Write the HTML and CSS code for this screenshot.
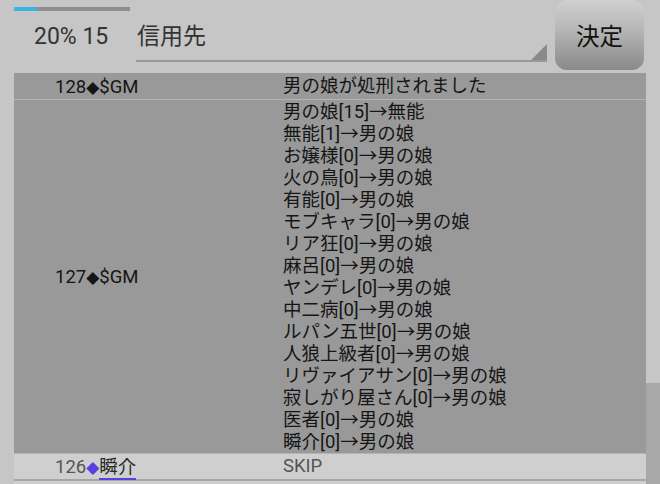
FILE: index.html
```html
<!DOCTYPE html>
<html lang="ja">
<head>
    <meta charset="UTF-8">
    <title>Log</title>
    <link rel="stylesheet" href="styles.css">
</head>
<body>
    <div class="top-bar">
        <div class="status">
            <div class="progress"><div class="progress-fill"></div></div>
            <div class="status-text">20% 15</div>
        </div>
        <div class="select">
            <span class="select-text">信用先</span>
            <span class="select-arrow"></span>
        </div>
        <button class="decide">決定</button>
    </div>

    <div class="log-wrap">
        <div class="log">
            <div class="row">
                <div class="who">128<span class="dia">◆</span>$GM</div>
                <div class="what">男の娘が処刑されました</div>
            </div>
            <div class="row">
                <div class="who">127<span class="dia">◆</span>$GM</div>
                <div class="what">
                    <div>男の娘[15]→無能</div>
                    <div>無能[1]→男の娘</div>
                    <div>お嬢様[0]→男の娘</div>
                    <div>火の鳥[0]→男の娘</div>
                    <div>有能[0]→男の娘</div>
                    <div>モブキャラ[0]→男の娘</div>
                    <div>リア狂[0]→男の娘</div>
                    <div>麻呂[0]→男の娘</div>
                    <div>ヤンデレ[0]→男の娘</div>
                    <div>中二病[0]→男の娘</div>
                    <div>ルパン五世[0]→男の娘</div>
                    <div>人狼上級者[0]→男の娘</div>
                    <div>リヴァイアサン[0]→男の娘</div>
                    <div>寂しがり屋さん[0]→男の娘</div>
                    <div>医者[0]→男の娘</div>
                    <div>瞬介[0]→男の娘</div>
                </div>
            </div>
            <div class="row light">
                <div class="who muted">126<span class="dia blue">◆</span><span class="name">瞬介</span></div>
                <div class="what muted">SKIP</div>
            </div>
            <div class="row light"></div>
        </div>
        <div class="scrollbar"><div class="thumb"></div></div>
    </div>
</body>
</html>
```

FILE: styles.css
```css
body {
    margin: 0;
    width: 660px;
    height: 484px;
    overflow: hidden;
    background-color: #c6c6c6;
    font-family: Roboto, "Noto Sans CJK JP", sans-serif;
    color: #151515;
}
.top-bar {
    display: flex;
    height: 73px;
}
.status {
    width: 122px;
    padding-left: 14px;
    padding-top: 7px;
}
.progress {
    width: 116px;
    height: 4px;
    background-color: #8e8e8e;
}
.progress-fill {
    width: 23px;
    height: 4px;
    background-color: #3ab4e2;
}
.status-text {
    margin-top: 12px;
    padding-left: 20px;
    font-size: 23px;
    color: #333;
}
.select {
    display: flex;
    align-items: flex-start;
    justify-content: space-between;
    width: 411px;
    height: 60px;
    border-bottom: 2px solid #999;
    position: relative;
}
.select-text {
    margin-top: 17px;
    padding-left: 1px;
    font-size: 23px;
    color: #333;
}
.select-arrow {
    position: absolute;
    right: 0;
    bottom: 0;
    width: 0;
    height: 0;
    border-left: 16px solid transparent;
    border-bottom: 16px solid #8a8a8a;
}
.decide {
    width: 89px;
    height: 70px;
    margin-left: 8px;
    border: none;
    border-radius: 12px;
    background: linear-gradient(#d0d0d0, #b8b8b8 40%, #898989);
    font-family: "Noto Sans CJK JP", sans-serif;
    font-size: 23.5px;
    color: #111;
    padding: 0;
}
.log-wrap {
    display: flex;
    padding-left: 14px;
}
.log {
    width: 632px;
    background-color: #999;
}
.row {
    display: grid;
    grid-template-columns: 269px 1fr;
    border-bottom: 1px solid #b4b4b4;
    font-size: 18.5px;
    line-height: 22px;
    min-height: 24px;
    padding: 1px 0 0;
}
.row:first-child {
    padding-top: 2px;
}
.who {
    padding-left: 41px;
    align-self: center;
}
.dia {
    font-family: "DejaVu Sans", sans-serif;
    font-size: 17px;
}
.blue {
    color: #5b3fe0;
}
.name {
    color: #2a2a2a;
    border-bottom: 2px solid #5b3fe0;
}
.muted {
    color: #555;
}
.row.light {
    background-color: #cfcfcf;
    border-bottom: 2px solid #a6a6a6;
}
.scrollbar {
    width: 14px;
    position: relative;
}
.thumb {
    position: absolute;
    top: 310px;
    left: 0;
    width: 14px;
    height: 120px;
    background-color: #a8a8a8;
}
```
